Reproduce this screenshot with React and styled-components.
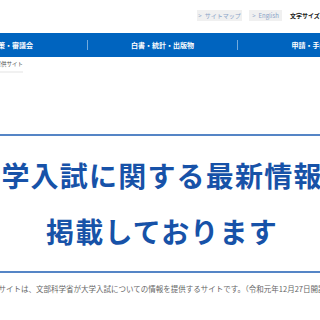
import React from 'react';
import styled, { createGlobalStyle } from 'styled-components';

const GlobalStyle = createGlobalStyle`
  html, body {
    margin: 0;
    padding: 0;
    background: #fff;
    overflow: hidden;
  }
  body {
    font-family: "Noto Sans CJK JP", "Noto Sans", sans-serif;
  }
`;

const Page = styled.div`
  width: 320px;
  height: 320px;
  overflow: hidden;
`;

const Inner = styled.div`
  width: 450px;
  margin-left: -63px;
`;

const Header = styled.div`
  height: 33px;
  display: flex;
  align-items: center;
  padding-left: 260px;
  gap: 7px;
  box-sizing: border-box;
`;

const HeaderButton = styled.div`
  height: 11px;
  width: ${p => p.$w}px;
  background: #f0f0f0;
  color: #8aa4c8;
  font-size: 6px;
  display: flex;
  align-items: center;
  justify-content: center;
  gap: 3px;
  white-space: nowrap;
  margin-top: -2px;
`;

const FontLabel = styled.div`
  font-size: 6px;
  font-weight: 700;
  color: #222;
  white-space: nowrap;
  margin-left: 1px;
  margin-top: -2px;
`;

const Nav = styled.nav`
  height: 24px;
  background: #0064bf;
  display: flex;
  align-items: center;
`;

const NavItem = styled.div`
  width: 150px;
  text-align: center;
  color: #fff;
  font-size: 7px;
  font-weight: 700;
  border-left: ${p => (p.$first ? 'none' : '1px solid rgba(255,255,255,0.45)')};
  line-height: 10px;
  box-sizing: border-box;
  white-space: nowrap;
`;

const Breadcrumb = styled.div`
  height: 14px;
  display: flex;
  align-items: center;
  justify-content: flex-end;
  width: 86px;
  font-size: 5.5px;
  color: #555;
  white-space: nowrap;
  border-bottom: 2px solid #f1f1f1;
`;

const Main = styled.main`
  margin-top: 61px;
  border-top: 2px solid #5585c6;
  border-bottom: 2px solid #5585c6;
  padding: 11px 0 12px;
  text-align: center;
`;

const Lead = styled.h1`
  margin: 0;
  font-size: 28px;
  line-height: 56px;
  font-weight: 700;
  color: #1752a8;
  white-space: nowrap;
  letter-spacing: 1.2px;
`;

const Note = styled.p`
  margin: 10px 0 0;
  font-size: 7.5px;
  color: #666;
  text-align: center;
  white-space: nowrap;
`;

export default function App() {
  return (
    <Page>
      <GlobalStyle />
      <Inner>
        <Header>
          <HeaderButton $w={45}><span>&gt;</span>サイトマップ</HeaderButton>
          <HeaderButton $w={33}><span>&gt;</span>English</HeaderButton>
          <FontLabel>文字サイズの変更</FontLabel>
        </Header>
        <Nav>
          <NavItem $first>政策・審議会</NavItem>
          <NavItem>白書・統計・出版物</NavItem>
          <NavItem>申請・手続き</NavItem>
        </Nav>
        <Breadcrumb>大学入試情報提供サイト</Breadcrumb>
        <Main>
          <Lead>大学入試に関する最新情報を<br />掲載しております</Lead>
        </Main>
        <Note>本サイトは、文部科学省が大学入試についての情報を提供するサイトです。（令和元年12月27日開設）</Note>
      </Inner>
    </Page>
  );
}
